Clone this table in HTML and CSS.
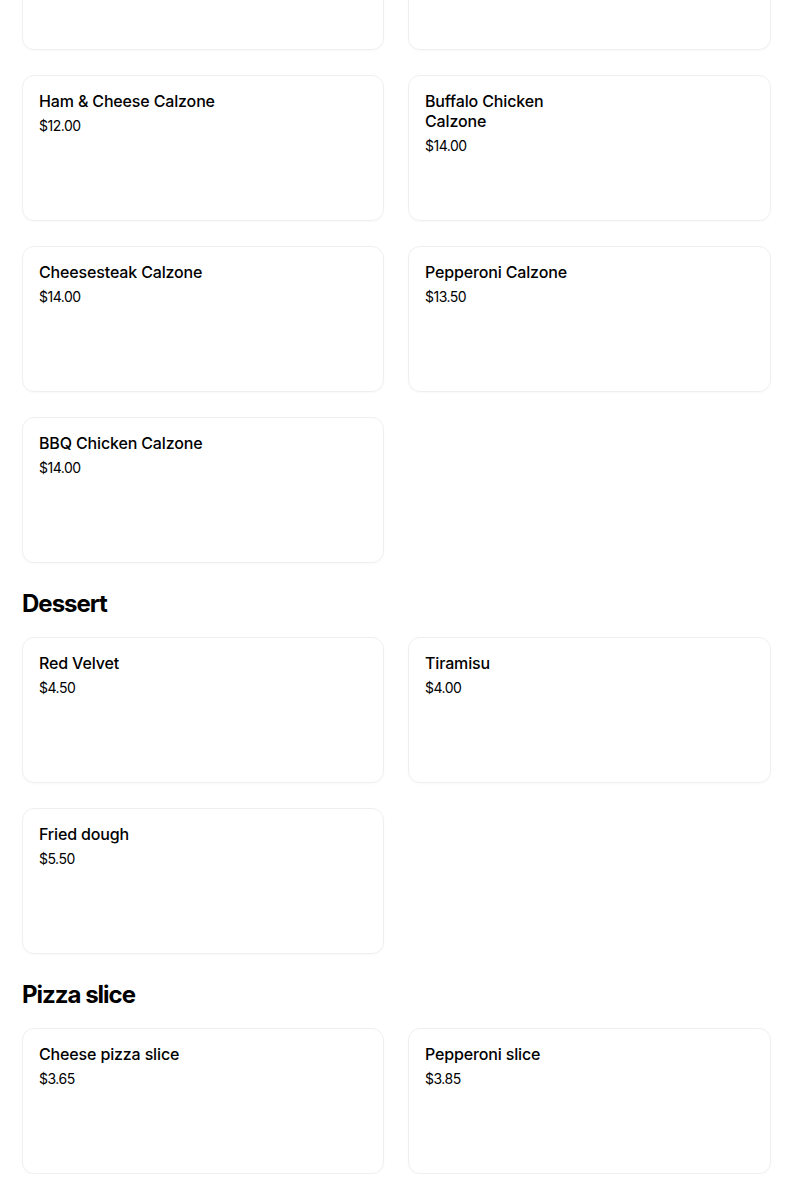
FILE: index.html
```html
<!DOCTYPE html>
<html lang="en">
<head>
<meta charset="utf-8">
<title>Menu</title>
<link rel="stylesheet" href="styles.css">
</head>
<body>
<main class="menu">
  <section class="section section-continued">
    <div class="grid">
      <div class="card"></div>
      <div class="card"></div>
      <div class="card"><div class="name">Ham &amp; Cheese Calzone</div><div class="price">$12.00</div></div>
      <div class="card"><div class="name name-narrow">Buffalo Chicken Calzone</div><div class="price">$14.00</div></div>
      <div class="card"><div class="name">Cheesesteak Calzone</div><div class="price">$14.00</div></div>
      <div class="card"><div class="name">Pepperoni Calzone</div><div class="price">$13.50</div></div>
      <div class="card"><div class="name">BBQ Chicken Calzone</div><div class="price">$14.00</div></div>
    </div>
  </section>
  <section class="section">
    <h2 class="heading">Dessert</h2>
    <div class="grid">
      <div class="card"><div class="name">Red Velvet</div><div class="price">$4.50</div></div>
      <div class="card"><div class="name">Tiramisu</div><div class="price">$4.00</div></div>
      <div class="card"><div class="name">Fried dough</div><div class="price">$5.50</div></div>
    </div>
  </section>
  <section class="section">
    <h2 class="heading">Pizza slice</h2>
    <div class="grid">
      <div class="card"><div class="name">Cheese pizza slice</div><div class="price">$3.65</div></div>
      <div class="card"><div class="name">Pepperoni slice</div><div class="price">$3.85</div></div>
    </div>
  </section>
</main>
</body>
</html>
```
FILE: styles.css
```css
html, body {
  margin: 0;
  padding: 0;
  background: #ffffff;
  color: #000000;
  font-family: Inter, "Noto Sans", "Liberation Sans", sans-serif;
}

.menu {
  padding: 0 0 0 22px;
  display: flex;
  flex-direction: column;
  gap: 25px;
}

.section-continued {
  margin-top: -96px;
}

.heading {
  margin: 0 0 17px;
  font-size: 24px;
  line-height: 32px;
  font-weight: 700;
  letter-spacing: -1px;
}

.grid {
  display: grid;
  grid-template-columns: 362px 363px;
  column-gap: 24px;
  row-gap: 25px;
}

.card {
  box-sizing: border-box;
  height: 146px;
  border: 1px solid #efefef;
  border-radius: 12px;
  padding: 15px 16px 16px;
  box-shadow: 0 1px 2px rgba(0, 0, 0, 0.03);
}

.name {
  font-size: 16px;
  line-height: 20px;
  font-weight: 500;
  letter-spacing: -0.15px;
}

.name-narrow {
  max-width: 140px;
}

.price {
  margin-top: 5px;
  font-size: 14px;
  line-height: 20px;
  font-weight: 400;
  letter-spacing: -0.5px;
}
```
